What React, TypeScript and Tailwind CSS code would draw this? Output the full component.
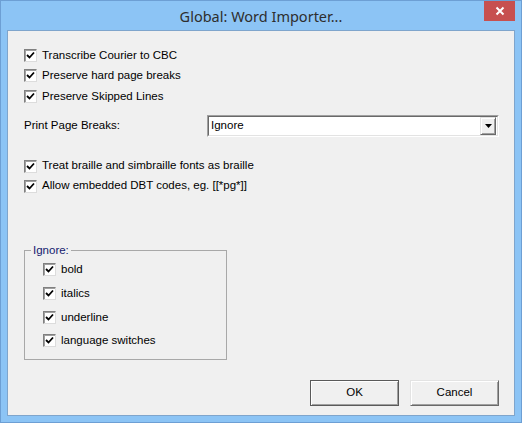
import type { ReactNode } from 'react'

function CheckBox() {
  return (
    <span className="flex h-[13px] w-[13px] shrink-0 items-center justify-center border border-t-[#808080] border-l-[#808080] border-b-[#dcdcdc] border-r-[#dcdcdc] bg-white shadow-[inset_1px_1px_0_#a0a0a0]">
      <svg width="9" height="9" viewBox="0 0 9 9">
        <path d="M1 4 L3.5 6.5 L8 1.5" fill="none" stroke="#000" strokeWidth="1.8" />
      </svg>
    </span>
  )
}

function CheckRow({ label, className }: { label: string; className: string }) {
  return (
    <div className={`flex items-center gap-[5px] ${className}`}>
      <CheckBox />
      <span>{label}</span>
    </div>
  )
}

function Button({ children, isDefault }: { children: ReactNode; isDefault?: boolean }) {
  return (
    <button
      type="button"
      className={
        isDefault
          ? 'flex h-[26px] w-[89px] items-center justify-center border border-[#5a5a5a] bg-[#f0f0f0] shadow-[inset_1px_1px_0_#ffffff,inset_-1px_-1px_0_#a0a0a0]'
          : 'flex h-[26px] w-[89px] items-center justify-center border border-t-[#e3e3e3] border-l-[#e3e3e3] border-b-[#696969] border-r-[#696969] bg-[#f0f0f0] shadow-[inset_1px_1px_0_#ffffff,inset_-1px_-1px_0_#a0a0a0]'
      }
    >
      {children}
    </button>
  )
}

export default function App() {
  return (
    <div
      className="flex h-[423px] w-[522px] flex-col border border-[#6d9fd4] bg-[#8cc4f5] text-[11.5px] text-black"
      style={{ fontFamily: '"Liberation Sans", Arial, sans-serif' }}
    >
      {/* title bar */}
      <div className="grid h-[29px] shrink-0 grid-cols-[1fr_auto_1fr]">
        <div />
        <div
          className="pt-[5px] text-[14.5px] text-[#2e2e2e]"
          style={{ fontFamily: '"Noto Sans", "Liberation Sans", sans-serif' }}
        >
          Global: Word Importer...
        </div>
        <div className="flex justify-end pr-[6px]">
          <div className="flex h-[20px] w-[31px] items-center justify-center bg-[#c75050]">
            <svg width="10" height="10" viewBox="0 0 10 10">
              <path d="M1.5 1.5 L8.5 8.5 M8.5 1.5 L1.5 8.5" stroke="#fff" strokeWidth="2" />
            </svg>
          </div>
        </div>
      </div>

      {/* client area */}
      <div className="mx-[6px] flex h-[386px] flex-col border border-[#7fa5cc] bg-[#f0f0f0] pl-[16px] pr-[15px]">
        <div className="pt-[14px]">
          <CheckRow label="Transcribe Courier to CBC" className="h-[20.5px]" />
          <CheckRow label="Preserve hard page breaks" className="h-[20.5px]" />
          <CheckRow label="Preserve Skipped Lines" className="h-[20.5px]" />
        </div>

        <div className="mt-[8.5px] flex h-[22px] items-center">
          <span className="w-[183px]">Print Page Breaks:</span>
          <div className="flex h-[22px] flex-1 border border-t-[#a0a0a0] border-l-[#a0a0a0] border-b-white border-r-white">
            <div className="flex flex-1 items-center border border-t-[#696969] border-l-[#696969] border-b-[#e3e3e3] border-r-[#e3e3e3] bg-white pl-[2px] pr-[1px]">
              <span className="flex-1">Ignore</span>
              <div className="flex h-[18px] w-[16px] items-center justify-center border border-t-[#e3e3e3] border-l-[#e3e3e3] border-b-[#696969] border-r-[#696969] bg-[#f0f0f0] shadow-[inset_1px_1px_0_#fff,inset_-1px_-1px_0_#a0a0a0]">
                <svg width="7" height="4" viewBox="0 0 7 4">
                  <path d="M0 0 H7 L3.5 4 Z" fill="#000" />
                </svg>
              </div>
            </div>
          </div>
        </div>

        <div className="mt-[19px]">
          <CheckRow label="Treat braille and simbraille fonts as braille" className="h-[20px]" />
          <CheckRow label="Allow embedded DBT codes, eg. [[*pg*]]" className="h-[20px]" />
        </div>

        <fieldset className="mt-[47px] w-[203px] border border-[#a8a8a8] pb-[6px]">
          <legend className="ml-[6px] px-[2px] leading-[14px] text-[#14206e]">Ignore:</legend>
          <div className="pl-[18px] pt-[1px]">
            <CheckRow label="bold" className="h-[23.7px]" />
            <CheckRow label="italics" className="h-[23.7px]" />
            <CheckRow label="underline" className="h-[23.7px]" />
            <CheckRow label="language switches" className="h-[23.7px]" />
          </div>
        </fieldset>

        <div className="mt-auto flex justify-end gap-[11px] pb-[9px]">
          <Button isDefault>OK</Button>
          <Button>Cancel</Button>
        </div>
      </div>
    </div>
  )
}
